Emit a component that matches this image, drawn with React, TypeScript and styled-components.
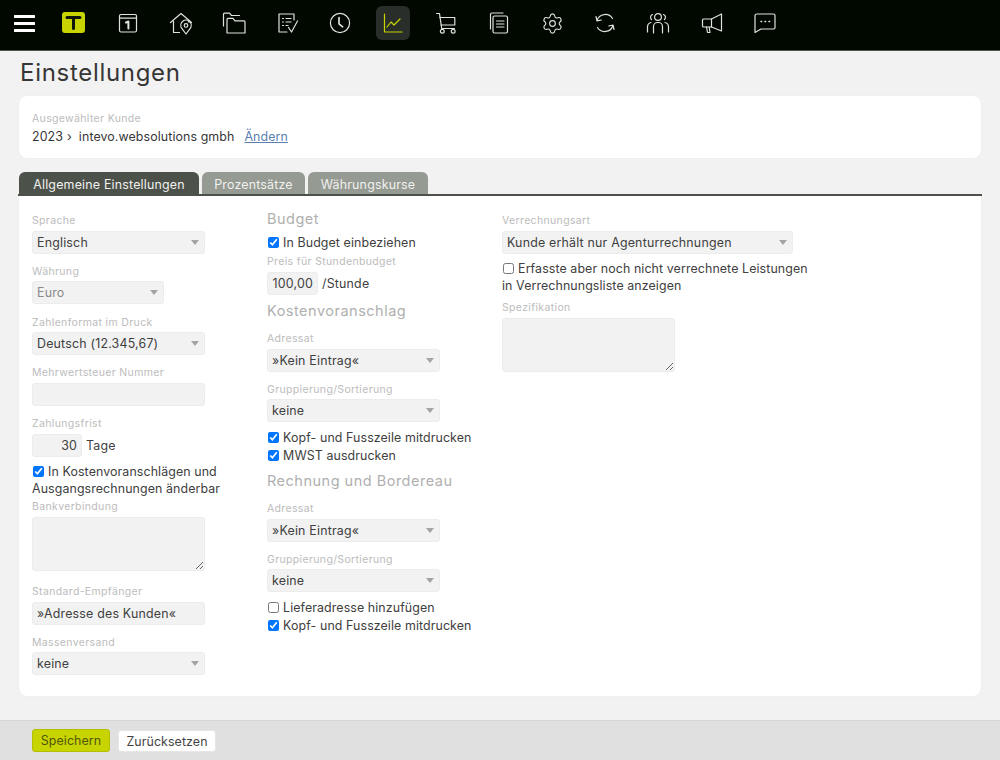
import React from "react";
import styled, { createGlobalStyle } from "styled-components";
import { Settings } from "lucide-react";

const Global = createGlobalStyle`
  html, body { margin: 0; padding: 0; background: #f2f2f2; }
  body { font-family: "Inter", "Liberation Sans", sans-serif; font-size: 12.4px; color: #404040; letter-spacing: 0.2px; }
  #root { width: 1000px; height: 760px; position: relative; overflow: hidden; }
`;

const TopBar = styled.header`
  height: 50px; background: #000800; border-bottom: 1px solid #50564f;
  display: flex; align-items: flex-start; position: relative;
`;
const Burger = styled.div`
  position: absolute; left: 14px; top: 15px; width: 21px; height: 17px;
  display: flex; flex-direction: column; justify-content: space-between;
  & > span { display: block; height: 3px; background: #fff; border-radius: 0.5px; }
`;
const Logo = styled.div`
  position: absolute; left: 62px; top: 12px; width: 23px; height: 21px;
  background: #c8d400; border-radius: 3px;
  display: flex; align-items: center; justify-content: center;
`;
const Nav = styled.nav`
  position: absolute; left: 110.5px; top: 6px; display: flex; gap: 19.1px;
`;
const NavItem = styled.div<{ $active?: boolean }>`
  width: 34px; height: 34px; border-radius: 6px;
  display: flex; align-items: center; justify-content: center;
  background: ${(p) => (p.$active ? "#2a2e2a" : "transparent")};
  color: ${(p) => (p.$active ? "#c8d400" : "#dfe2de")};
  & svg { width: 24px; height: 24px; fill: none; stroke: currentColor; stroke-width: 1.2; stroke-linecap: round; stroke-linejoin: round; }
`;
const Title = styled.h1`
  position: absolute; left: 20px; top: 58px; margin: 0;
  font-size: 24px; line-height: 30px; font-weight: 400; color: #363636; letter-spacing: 0.7px;
`;
const CustomerCard = styled.section`
  position: absolute; left: 19px; top: 96px; width: 962px; height: 62px;
  background: #fff; border-radius: 8px; box-shadow: 0 0 2px rgba(0,0,0,0.06);
  padding: 15px 13px; box-sizing: border-box;
`;
const SmallLabel = styled.label`
  display: block; font-size: 10.5px; line-height: 16px; color: #bcbcbc; letter-spacing: 0.35px;
`;
const CustomerLine = styled.div`
  display: flex; line-height: 17px; margin-top: 1px; color: #363636; letter-spacing: 0.1px;
`;
const Sep = styled.span` margin: 0 7px 0 4px; `;
const ChangeLink = styled.a`
  margin-left: 10px; color: #5a7fb0; text-decoration: underline;
`;
const Tabs = styled.div`
  position: absolute; left: 19px; top: 172px; display: flex; gap: 3px;
`;
const Tab = styled.div<{ $active?: boolean; $w: number }>`
  height: 23px; line-height: 26px; box-sizing: border-box;
  width: ${(p) => p.$w}px; text-align: center;
  border-radius: 6px 6px 0 0; color: #f1f1ef; white-space: nowrap;
  background: ${(p) => (p.$active ? "#4c514a" : "#959a92")};
`;
const MainCard = styled.section`
  position: absolute; left: 19px; top: 196px; width: 962px; height: 500px;
  background: #fff; border-radius: 0 0 8px 8px; box-shadow: 0 0 2px rgba(0,0,0,0.06);
`;
const TabLine = styled.div`
  position: absolute; left: 18px; top: 194px; width: 964px; height: 2px; background: #4c514a;
`;
const Column = styled.div<{ $left: number; $top?: number }>`
  position: absolute; left: ${(p) => p.$left}px; top: ${(p) => p.$top ?? 17}px; display: flex; flex-direction: column; align-items: flex-start;
`;
const Field = styled.div<{ $after?: number }>`
  display: block; margin-bottom: ${(p) => p.$after ?? 10.25}px;
`;
const FieldLabel = styled(SmallLabel)` margin-bottom: 1.5px; `;
const SelectWrap = styled.div<{ $w?: number }>`
  position: relative; width: ${(p) => p.$w ?? 173}px; height: 23px;
  &::after {
    content: ""; position: absolute; right: 6px; top: 9px; width: 0; height: 0;
    border-left: 4px solid transparent; border-right: 4px solid transparent; border-top: 5px solid #a4a4a4;
    pointer-events: none;
  }
`;
const Select = styled.select`
  appearance: none; width: 100%; height: 100%; margin: 0; padding: 0 20px 0 4px; box-sizing: border-box;
  background: #f2f2f2; border: 1px solid #ececec; border-radius: 3px;
  font: inherit; letter-spacing: inherit; color: #404040; outline: none;
  &:disabled { color: #8a8a8a; opacity: 1; }
`;
const TextInput = styled.input<{ $w?: number; $right?: boolean }>`
  display: block; width: ${(p) => p.$w ?? 173}px; height: 23px; margin: 0; box-sizing: border-box; padding: 0 4px;
  background: #f2f2f2; border: 1px solid #ececec; border-radius: 3px; outline: none;
  font: inherit; letter-spacing: inherit; color: #404040; text-align: ${(p) => (p.$right ? "right" : "left")};
`;
const Area = styled.textarea`
  display: block; width: 173px; height: 54px; margin: 0; box-sizing: border-box;
  background: #f2f2f2; border: 1px solid #ececec; border-radius: 3px; outline: none; font: inherit;
`;
const InlineRow = styled.div`
  display: flex; align-items: center;
`;
const Unit = styled.span` margin-left: 4px; `;
const CheckLine = styled.label<{ $w?: number; $after?: number }>`
  display: block; width: ${(p) => p.$w ?? 225}px; line-height: 17px; margin-bottom: ${(p) => p.$after ?? 1}px; color: #404040; letter-spacing: 0.1px;
`;
const Check = styled.input.attrs({ type: "checkbox" })`
  width: 11px; height: 11px; margin: 0 0.5px 0 1px; vertical-align: -1px;
`;
const Heading = styled.h3<{ $after?: number }>`
  margin: 0 0 ${(p) => p.$after ?? 0}px; font-size: 14.5px; line-height: 18px; font-weight: 400; color: #b0b0b0; letter-spacing: 0.5px;
`;
const Footer = styled.footer`
  position: absolute; left: 0; top: 720px; width: 1000px; height: 40px; background: #e0e0e0;
  border-top: 1px solid #d6d6d6; box-sizing: border-box;
`;
const FooterButton = styled.button<{ $primary?: boolean; $left: number; $w: number }>`
  position: absolute; left: ${(p) => p.$left}px; top: ${(p) => (p.$primary ? 8 : 9)}px;
  width: ${(p) => p.$w}px; height: ${(p) => (p.$primary ? 23 : 22)}px; padding: 0; border-radius: 3px;
  font: inherit; letter-spacing: 0.1px; cursor: pointer;
  background: ${(p) => (p.$primary ? "#c8d400" : "#fff")};
  border: 1px solid ${(p) => (p.$primary ? "#b4bf00" : "#e6e6e6")};
  color: ${(p) => (p.$primary ? "#50560a" : "#444")};
`;

const icons: React.ReactNode[] = [
  <svg viewBox="0 0 24 24" key="cal"><rect x="3.5" y="3.5" width="17" height="17.5" rx="1.5" /><path d="M3.5 7.2h17" /><path d="M10 11.5l2.4-1v7" strokeWidth="2" /></svg>,
  <svg viewBox="0 0 24 24" key="home"><path d="M1.5 11.5L12 2.5l10.5 9" /><path d="M4.5 10v11.5h6" /><path d="M19.5 10v1" /><path d="M17 23l-4.2-5.6a5.2 5.2 0 1 1 8.4 0z" /><circle cx="17" cy="14.4" r="1.8" /></svg>,
  <svg viewBox="0 0 24 24" key="folders"><path d="M1.5 15V3.2c0-.6.4-1 1-1h5l2 2.3h8" /><path d="M5 22V8.5c0-.7.4-1.1 1-1.1h5l2 2.5h9c.6 0 1 .4 1 1V22z" /></svg>,
  <svg viewBox="0 0 24 24" key="list"><path d="M19 9V3H4v18h8" /><path d="M7.5 7.5h1M11 7.5h5M7.5 11h1M11 11h5M7.5 14.5h1M11 14.5h2" /><path d="M13.5 16.5l3 4.5 6-11" /></svg>,
  <svg viewBox="0 0 24 24" key="clock"><circle cx="12" cy="12" r="9.6" /><path d="M11 6.5v6.3l3.6 3" strokeWidth="1.7" /></svg>,
  <svg viewBox="0 0 24 24" key="chart"><path d="M3.5 3v18h17.5" /><path d="M6 16l4-5 3 3 6-6" /></svg>,
  <svg viewBox="0 0 24 24" key="cart"><path d="M2.5 2.5h3l2.2 15h12.8" /><path d="M5.8 6.5h15v7.5H7" /><circle cx="8.3" cy="20.3" r="1.9" /><circle cx="19.2" cy="20.3" r="1.9" /></svg>,
  <svg viewBox="0 0 24 24" key="docs"><path d="M3.5 18V3.5c0-.7.5-1.5 1.5-1.5h11" /><rect x="6" y="5" width="14.5" height="17" rx="1.5" /><path d="M9.5 10h7.5M9.5 13h7.5M9.5 16h7.5" /></svg>,
  <Settings key="gear" style={{ width: 23, height: 23 }} strokeWidth={1.2} />,
  <svg viewBox="0 0 24 24" key="sync"><path d="M4 9.5A8.6 8.6 0 0 1 19.5 7.5" /><path d="M20 14.5A8.6 8.6 0 0 1 4.5 16.5" /><path d="M3 5.5l1 4.3 4.3-.8" /><path d="M21 18.5l-1-4.3-4.3.8" /></svg>,
  <svg viewBox="0 0 24 24" key="people"><circle cx="12" cy="6" r="3.4" /><path d="M6.5 3.5a3 3 0 0 0-1 5" /><path d="M17.5 3.5a3 3 0 0 1 1 5" /><path d="M7.5 22v-6.5a4 4 0 0 1 4-4h1a4 4 0 0 1 4 4V22" /><path d="M1.5 21v-5c0-2.5 1.5-4 3.5-4.5" /><path d="M22.5 21v-5c0-2.5-1.5-4-3.5-4.5" /></svg>,
  <svg viewBox="0 0 24 24" key="mega"><path d="M21.5 3v17L11.5 16H3.5a1 1 0 0 1-1-1V9a1 1 0 0 1 1-1h8z" /><path d="M11.5 8v8" /><path d="M6.5 16l1 5.5h2.5l-.8-5.5" /></svg>,
  <svg viewBox="0 0 24 24" key="chat"><path d="M4 3h16.5c1 0 1.5.6 1.5 1.5v12c0 1-.6 1.5-1.5 1.5H8l-6 3.5V4.5C2 3.6 2.8 3 4 3z" /><path d="M8 10.5h.6M12 10.5h.6M16 10.5h.6" strokeWidth="1.6" /></svg>,
];

const LabeledSelect = ({ label, value, w, disabled, after }: { label: string; value: string; w?: number; disabled?: boolean; after?: number }) => (
  <Field $after={after}>
    <FieldLabel>{label}</FieldLabel>
    <SelectWrap $w={w}>
      <Select defaultValue={value} disabled={disabled}><option>{value}</option></Select>
    </SelectWrap>
  </Field>
);

export default function App() {
  return (
    <>
      <Global />
      <TopBar>
        <Burger><span /><span /><span /></Burger>
        <Logo>
          <svg viewBox="0 0 23 21" width="23" height="21"><path d="M5 5.5h13M11.5 5.5v11" fill="none" stroke="#11150a" strokeWidth="3" strokeLinecap="round" /></svg>
        </Logo>
        <Nav>
          {icons.map((ic, i) => (<NavItem key={i} $active={i === 5}>{ic}</NavItem>))}
        </Nav>
      </TopBar>
      <Title>Einstellungen</Title>
      <CustomerCard>
        <SmallLabel>Ausgewählter Kunde</SmallLabel>
        <CustomerLine>2023<Sep>›</Sep>intevo.websolutions gmbh<ChangeLink>Ändern</ChangeLink></CustomerLine>
      </CustomerCard>
      <Tabs>
        <Tab $active $w={180}>Allgemeine Einstellungen</Tab>
        <Tab $w={103}>Prozentsätze</Tab>
        <Tab $w={120}>Währungskurse</Tab>
      </Tabs>
      <MainCard>
        <Column $left={13}>
          <LabeledSelect label="Sprache" value="Englisch" />
          <LabeledSelect label="Währung" value="Euro" w={132} disabled />
          <LabeledSelect label="Zahlenformat im Druck" value="Deutsch (12.345,67)" />
          <Field><FieldLabel>Mehrwertsteuer Nummer</FieldLabel><TextInput /></Field>
          <Field $after={6}>
            <FieldLabel>Zahlungsfrist</FieldLabel>
            <InlineRow><TextInput $w={50} $right defaultValue="30" /><Unit>Tage</Unit></InlineRow>
          </Field>
          <CheckLine $w={195} $after={2.5}><Check defaultChecked /> In Kostenvoranschlägen und Ausgangsrechnungen änderbar</CheckLine>
          <Field $after={13.5}><FieldLabel>Bankverbindung</FieldLabel><Area /></Field>
          <Field $after={10}><FieldLabel>Standard-Empfänger</FieldLabel><TextInput defaultValue="»Adresse des Kunden«" /></Field>
          <LabeledSelect label="Massenversand" value="keine" />
        </Column>
        <Column $left={248} $top={14}>
          <Heading $after={5.5}>Budget</Heading>
          <CheckLine $after={3.5}><Check defaultChecked /> In Budget einbeziehen</CheckLine>
          <Field $after={7.5}>
            <FieldLabel>Preis für Stundenbudget</FieldLabel>
            <InlineRow><TextInput $w={51} $right defaultValue="100,00" /><Unit>/Stunde</Unit></InlineRow>
          </Field>
          <Heading $after={11}>Kostenvoranschlag</Heading>
          <LabeledSelect label="Adressat" value="»Kein Eintrag«" />
          <LabeledSelect label="Gruppierung/Sortierung" value="keine" after={6.25} />
          <CheckLine><Check defaultChecked /> Kopf- und Fusszeile mitdrucken</CheckLine>
          <CheckLine $after={8.5}><Check defaultChecked /> MWST ausdrucken</CheckLine>
          <Heading $after={11}>Rechnung und Bordereau</Heading>
          <LabeledSelect label="Adressat" value="»Kein Eintrag«" />
          <LabeledSelect label="Gruppierung/Sortierung" value="keine" after={6.25} />
          <CheckLine><Check /> Lieferadresse hinzufügen</CheckLine>
          <CheckLine><Check defaultChecked /> Kopf- und Fusszeile mitdrucken</CheckLine>
        </Column>
        <Column $left={483}>
          <LabeledSelect label="Verrechnungsart" value="Kunde erhält nur Agenturrechnungen" w={291} after={6} />
          <CheckLine $w={315} $after={6.5}><Check /> Erfasste aber noch nicht verrechnete Leistungen in Verrechnungsliste anzeigen</CheckLine>
          <Field><FieldLabel>Spezifikation</FieldLabel><Area /></Field>
        </Column>
      </MainCard>
      <TabLine />
      <Footer>
        <FooterButton $primary $left={32} $w={78}>Speichern</FooterButton>
        <FooterButton $left={118} $w={98}>Zurücksetzen</FooterButton>
      </Footer>
    </>
  );
}
